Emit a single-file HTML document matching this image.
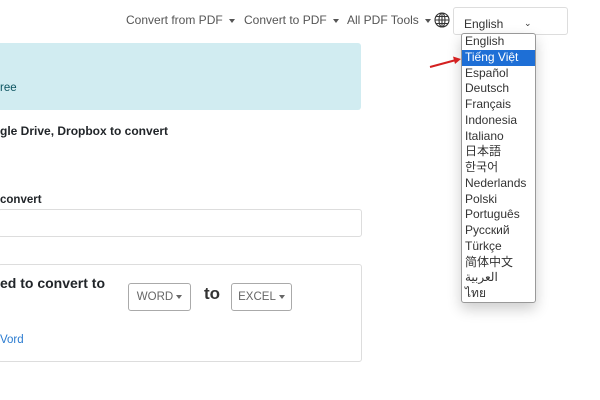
<!DOCTYPE html>
<html><head><style>
body{margin:0;width:600px;height:400px;background:#fff;position:relative;overflow:hidden;font-family:"Liberation Sans",sans-serif;color:#212529}
.a{position:absolute;white-space:nowrap}
.nav{font-size:12px;color:#555;top:13px}
.car{display:inline-block;border-left:3.5px solid transparent;border-right:3.5px solid transparent;border-top:4px solid #555;vertical-align:middle;margin-left:6px}
.dd{left:461px;top:33px;width:73px;height:268px;border:1px solid #999;border-radius:3px;background:#fff;box-shadow:0 6px 14px rgba(0,0,0,.2);font-family:"Liberation Sans","Noto Sans CJK JP",sans-serif;font-size:12px;color:#333}
.dd div{height:15.75px;line-height:15.75px;padding-left:3px}
.sel{background:#1e6fd6;color:#fff}
.btn{border:1px solid #aaa;border-radius:3px;font-size:11.5px;color:#666;height:26px;line-height:26px;text-align:center}
.btn .car{border-top-color:#666;margin-left:3px}
</style></head><body>
<div class="a nav" style="left:126px">Convert from PDF<span class="car"></span></div>
<div class="a nav" style="left:244px">Convert to PDF<span class="car"></span></div>
<div class="a nav" style="left:347px">All PDF Tools<span class="car"></span></div>
<svg class="a" style="left:434px;top:12px" width="16" height="16" viewBox="0 0 16 16" fill="none" stroke="#333" stroke-width="1.1"><circle cx="8" cy="8" r="7"/><ellipse cx="8" cy="8" rx="3" ry="7"/><path d="M1 8h14M2 4.5h12M2 11.5h12M8 1v14"/></svg>
<div class="a" style="left:453px;top:7px;width:113px;height:26px;border:1px solid #ddd;border-radius:3px"></div>
<div class="a" style="left:464px;top:17px;font-size:12px;color:#333">English</div>
<div class="a" style="left:524px;top:18px;font-size:9px;color:#333">⌄</div>
<div class="a dd">
<div>English</div><div class="sel">Tiếng Việt</div><div>Español</div><div>Deutsch</div><div>Français</div><div>Indonesia</div><div>Italiano</div><div>日本語</div><div>한국어</div><div>Nederlands</div><div>Polski</div><div>Português</div><div>Русский</div><div>Türkçe</div><div>简体中文</div><div>العربية</div><div>ไทย</div>
</div>
<svg class="a" style="left:428px;top:55px" width="36" height="16"><path d="M2 12L28 5" stroke="#d42020" stroke-width="2"/><path d="M33 4L25 1.5L27 9Z" fill="#d42020"/></svg>
<div class="a" style="left:0;top:43px;width:361px;height:67px;background:#d1ecf1;border-radius:0 3px 3px 0"></div>
<div class="a" style="left:0;top:82px;font-size:11.5px;color:#0c5460">ree</div>
<div class="a" style="left:0;top:124px;font-size:12px;font-weight:bold">gle Drive, Dropbox to convert</div>
<div class="a" style="left:0;top:194px;font-size:11.5px;font-weight:bold">convert</div>
<div class="a" style="left:-2px;top:209px;width:362px;height:26px;border:1px solid #ddd;border-radius:3px"></div>
<div class="a" style="left:-2px;top:264px;width:362px;height:96px;border:1px solid #ddd;border-radius:3px"></div>
<div class="a" style="left:0;top:275px;font-size:14px;font-weight:bold">ed to convert to</div>
<div class="a btn" style="left:128px;top:283px;width:61px">WORD<span class="car"></span></div>
<div class="a" style="left:204px;top:284px;font-size:17px;font-weight:bold;color:#333">to</div>
<div class="a btn" style="left:231px;top:283px;width:59px">EXCEL<span class="car"></span></div>
<div class="a" style="left:0;top:334px;font-size:11.5px;color:#2a7bd0">Vord</div>
</body></html>
